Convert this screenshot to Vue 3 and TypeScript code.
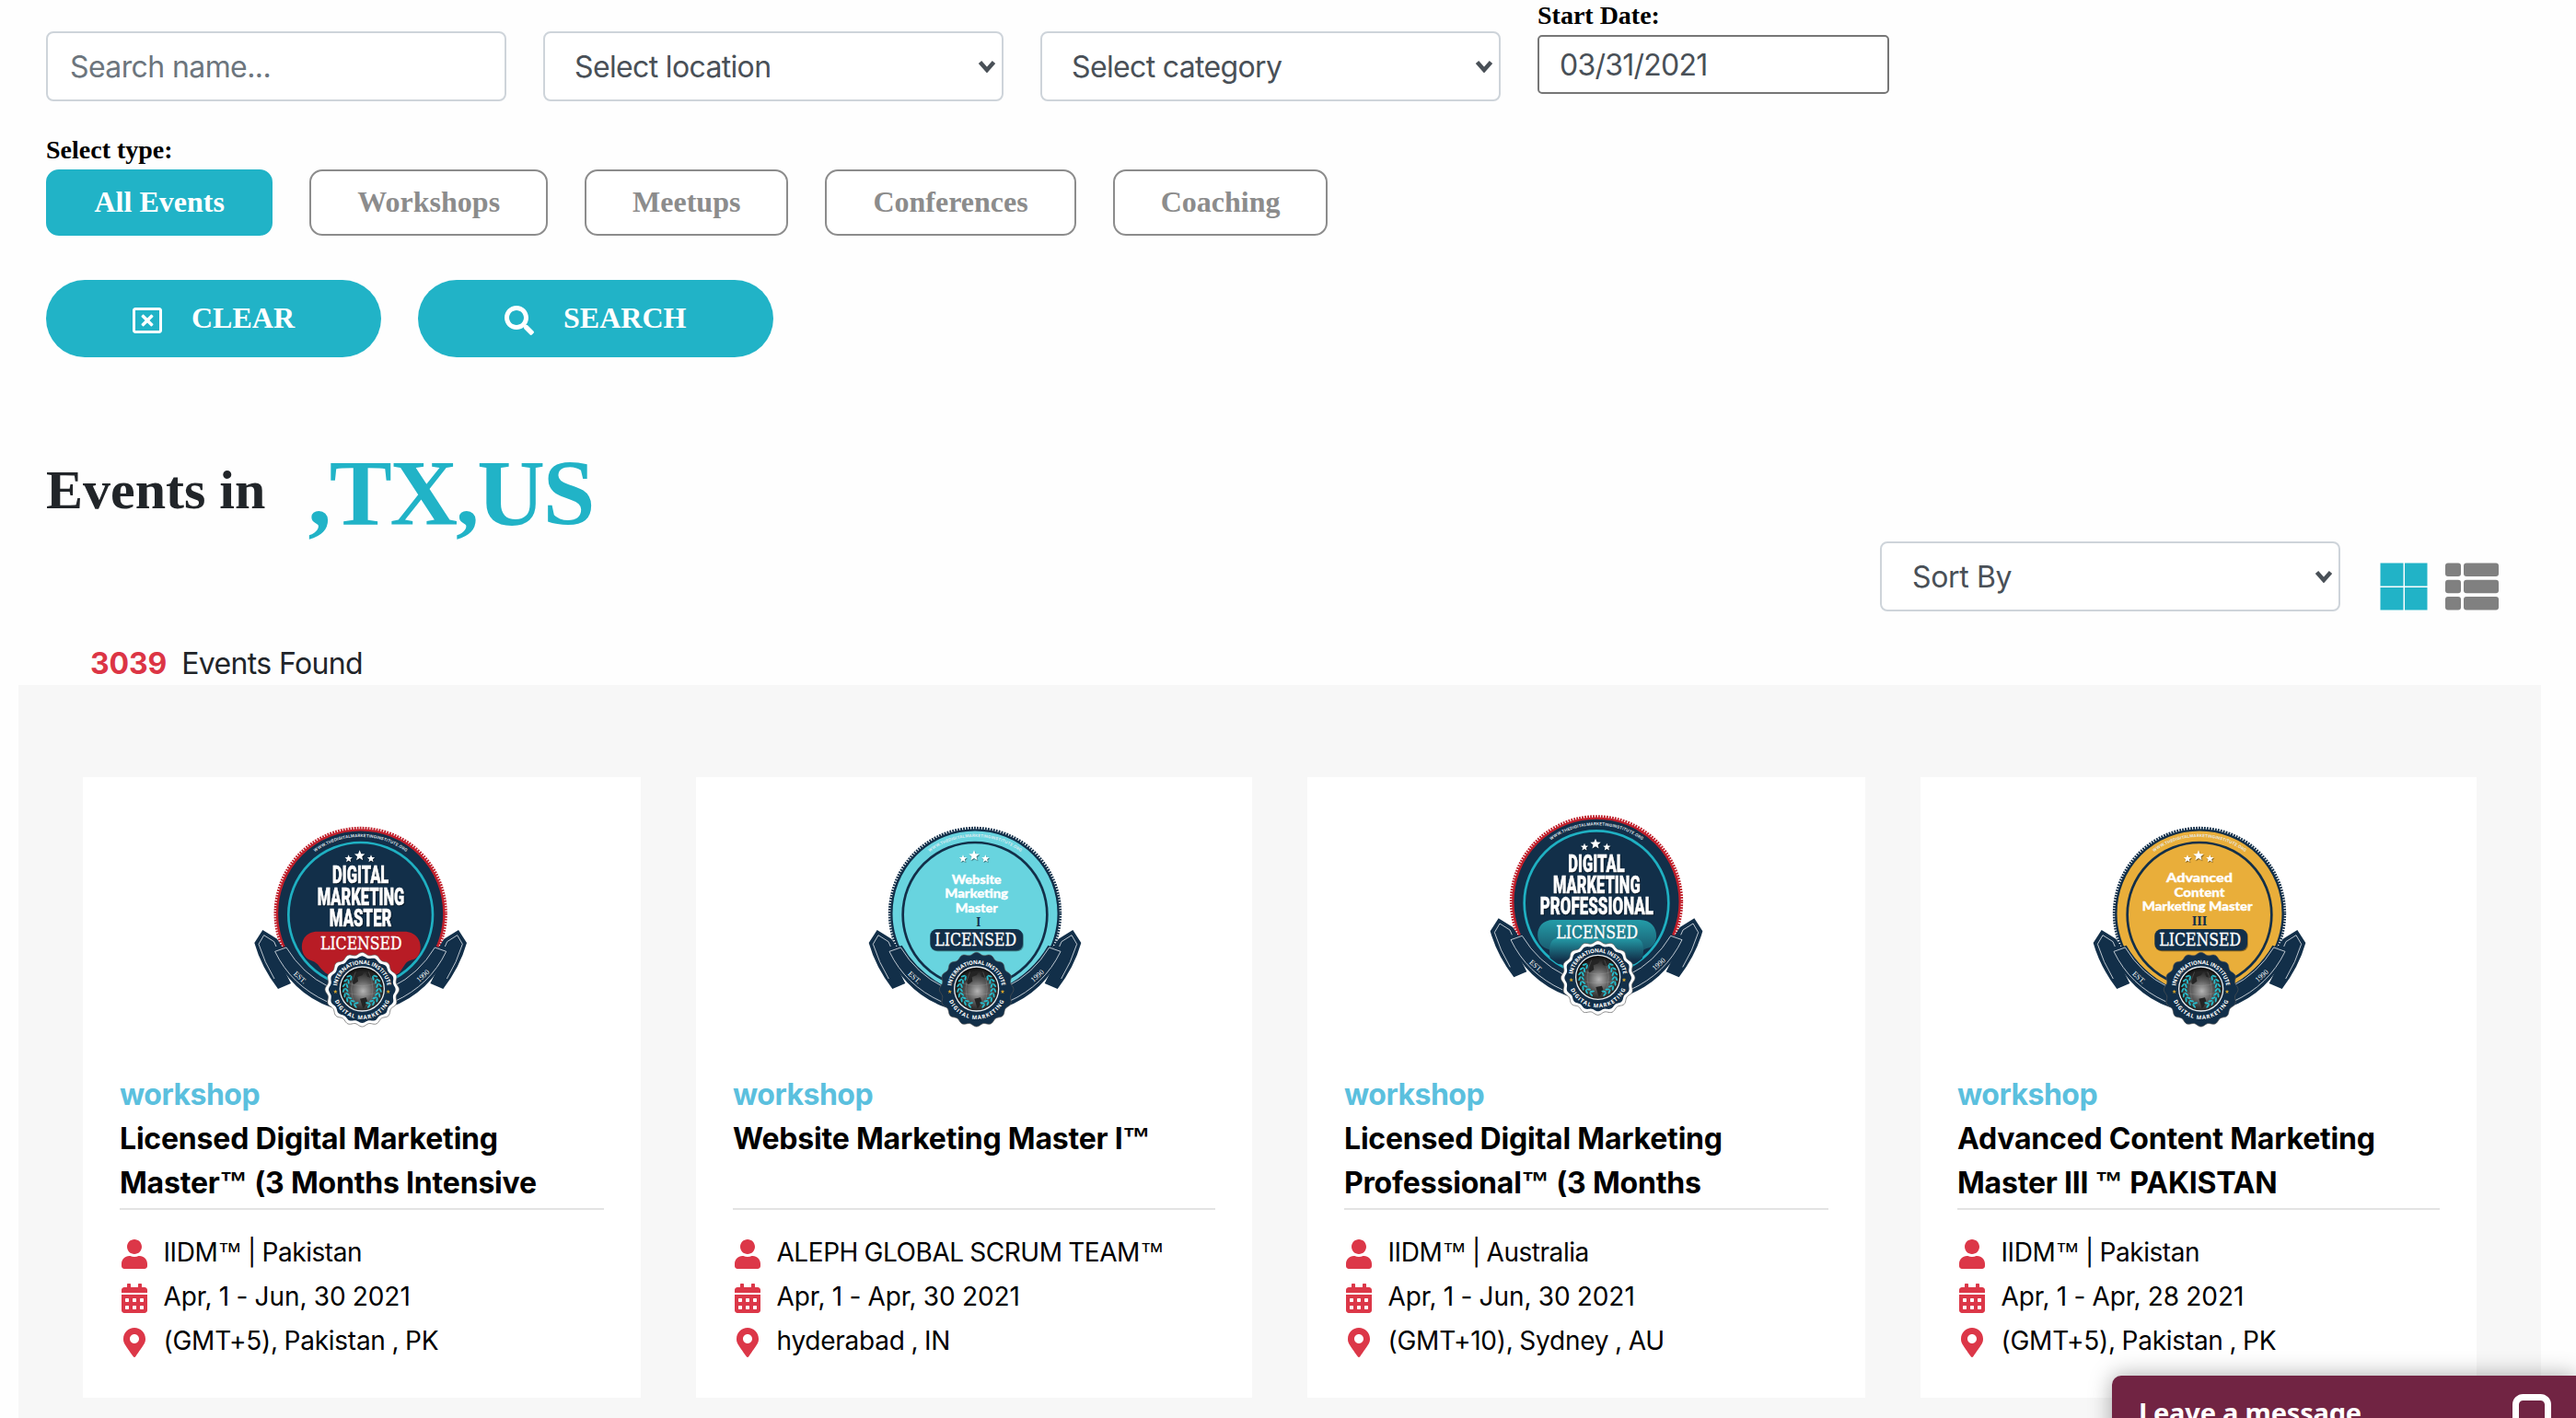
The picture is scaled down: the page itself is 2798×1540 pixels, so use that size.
<script setup lang="ts">
import { ref } from 'vue'

interface Line { text: string; x: number; y: number; w: number }
interface Badge {
  kind: 'dark' | 'light'
  dx: number
  dy: number
  face: string
  teeth: string
  ring: string
  seal: string
  lines: Line[]
  level?: Line
  banner?: 'red' | 'teal'
}
interface EventCard {
  type: string
  title: string[]
  host: string
  date: string
  place: string
  badge: Badge
}

const navy = '#122f49'
const teal = '#1fb0c2'

const types = ['All Events', 'Workshops', 'Meetups', 'Conferences', 'Coaching']
const activeType = ref('All Events')
const startDate = ref('03/31/2021')

const cards: EventCard[] = [
  {
    type: 'workshop',
    title: ['Licensed Digital Marketing', 'Master™ (3 Months Intensive'],
    host: 'IIDM™ | Pakistan',
    date: 'Apr, 1 - Jun, 30 2021',
    place: '(GMT+5), Pakistan , PK',
    badge: {
      kind: 'dark', dx: -8, dy: 0, face: navy, teeth: '#c01f2b', ring: teal, seal: '#ffffff', banner: 'red',
      lines: [
        { text: 'DIGITAL', x: 394, y: 268, w: 184 },
        { text: 'MARKETING', x: 395, y: 338, w: 284 },
        { text: 'MASTER', x: 394, y: 408, w: 203 }
      ]
    }
  },
  {
    type: 'workshop',
    title: ['Website Marketing Master I™'],
    host: 'ALEPH GLOBAL SCRUM TEAM™',
    date: 'Apr, 1 - Apr, 30 2021',
    place: 'hyderabad , IN',
    badge: {
      kind: 'light', dx: -1, dy: 0, face: '#68d4df', teeth: navy, ring: navy, seal: navy,
      lines: [
        { text: 'Website', x: 399, y: 269, w: 162 },
        { text: 'Marketing', x: 399, y: 316, w: 206 },
        { text: 'Master', x: 399, y: 363, w: 138 }
      ],
      level: { text: 'I', x: 405, y: 409, w: 15 }
    }
  },
  {
    type: 'workshop',
    title: ['Licensed Digital Marketing', 'Professional™ (3 Months'],
    host: 'IIDM™ | Australia',
    date: 'Apr, 1 - Jun, 30 2021',
    place: '(GMT+10), Sydney , AU',
    badge: {
      kind: 'dark', dx: 29, dy: -38, face: navy, teeth: '#c01f2b', ring: teal, seal: '#ffffff', banner: 'teal',
      lines: [
        { text: 'DIGITAL', x: 394, y: 268, w: 184 },
        { text: 'MARKETING', x: 395, y: 338, w: 284 },
        { text: 'PROFESSIONAL', x: 395, y: 408, w: 370 }
      ]
    }
  },
  {
    type: 'workshop',
    title: ['Advanced Content Marketing', 'Master III ™ PAKISTAN'],
    host: 'IIDM™ | Pakistan',
    date: 'Apr, 1 - Apr, 28 2021',
    place: '(GMT+5), Pakistan , PK',
    badge: {
      kind: 'light', dx: -1, dy: 0, face: '#e9ae3a', teeth: navy, ring: navy, seal: navy,
      lines: [
        { text: 'Advanced', x: 394, y: 264, w: 216 },
        { text: 'Content', x: 394, y: 311, w: 165 },
        { text: 'Marketing Master', x: 387, y: 358, w: 360 }
      ],
      level: { text: 'III', x: 394, y: 404, w: 50 }
    }
  }
]

// Splits a string so that each trademark sign can carry its own face.
function parts(text: string): string[] {
  return text.split(/(™)/).filter((p) => p !== '')
}

// Closed wavy outline with sixteen lobes, used for the seal.
function scallop(cx: number, cy: number, r: number, amp: number): string {
  const pts: string[] = []
  for (let i = 0; i < 192; i++) {
    const a = (i / 192) * Math.PI * 2
    const rr = r + amp * Math.cos(a * 16)
    pts.push(`${(cx + rr * Math.sin(a)).toFixed(1)},${(cy - rr * Math.cos(a)).toFixed(1)}`)
  }
  return pts.join(' ')
}

function star(cx: number, cy: number, r: number): string {
  const pts: string[] = []
  for (let i = 0; i < 10; i++) {
    const a = (i * Math.PI) / 5
    const rr = i % 2 ? r * 0.45 : r
    pts.push(`${(cx + rr * Math.sin(a)).toFixed(1)},${(cy - rr * Math.cos(a)).toFixed(1)}`)
  }
  return pts.join(' ')
}

// Laurel leaves: angle measured from the bottom of the globe, on both sides.
const leaves = [22, 38, 54, 70, 86, 102, 118, 134].flatMap((a) => [a, -a])
</script>

<template>
  <main class="page">
    <section class="filters">
      <div class="row fields">
        <input class="field" type="text" placeholder="Search name..." />
        <div class="select">
          <select class="field"><option>Select location</option></select>
          <svg class="caret" viewBox="0 0 20 14"><path d="M2.500 2.500 10 11l7.500-8.500" /></svg>
        </div>
        <div class="select">
          <select class="field"><option>Select category</option></select>
          <svg class="caret" viewBox="0 0 20 14"><path d="M2.500 2.500 10 11l7.500-8.500" /></svg>
        </div>
        <div class="date">
          <label class="label">Start Date:</label>
          <input v-model="startDate" class="date-input" type="text" />
        </div>
      </div>

      <div class="label type-label">Select type:</div>
      <div class="row">
        <button
          v-for="t in types"
          :key="t"
          class="type"
          :class="{ active: t === activeType }"
          @click="activeType = t"
        >{{ t }}</button>
      </div>

      <div class="row actions">
        <button class="action">
          <svg class="a-icon" viewBox="0 0 512 512"><path fill="currentColor" d="M464 32H48C21.500 32 0 53.500 0 80v352c0 26.500 21.500 48 48 48h416c26.500 0 48-21.500 48-48V80c0-26.500-21.500-48-48-48zm0 394c0 3.300-2.700 6-6 6H54c-3.300 0-6-2.700-6-6V86c0-3.300 2.700-6 6-6h404c3.300 0 6 2.700 6 6v340zM356.500 194.600L295.100 256l61.400 61.400c4.600 4.600 4.600 12.100 0 16.800l-22.300 22.300c-4.600 4.600-12.100 4.600-16.800 0L256 295.100l-61.400 61.400c-4.600 4.600-12.100 4.600-16.800 0l-22.300-22.300c-4.600-4.600-4.600-12.100 0-16.800l61.400-61.400-61.400-61.400c-4.600-4.600-4.600-12.100 0-16.800l22.300-22.300c4.600-4.600 12.100-4.600 16.800 0l61.400 61.400 61.400-61.400c4.600-4.600 12.100-4.600 16.800 0l22.300 22.300c4.700 4.600 4.700 12.100 0 16.800z" /></svg>
          <span>CLEAR</span>
        </button>
        <button class="action wide">
          <svg class="a-icon" viewBox="0 0 512 512"><path fill="currentColor" d="M505 442.700L405.300 343c-4.500-4.500-10.600-7-17-7H372c27.600-35.300 44-79.700 44-128C416 93.100 322.900 0 208 0S0 93.100 0 208s93.100 208 208 208c48.300 0 92.700-16.400 128-44v16.300c0 6.400 2.500 12.500 7 17l99.700 99.700c9.400 9.400 24.600 9.400 33.900 0l28.300-28.300c9.400-9.400 9.400-24.600.1-34zM208 336c-70.700 0-128-57.200-128-128 0-70.700 57.200-128 128-128 70.700 0 128 57.200 128 128 0 70.700-57.200 128-128 128z" /></svg>
          <span>SEARCH</span>
        </button>
      </div>
    </section>

    <header class="heading">
      <h2>Events in</h2>
      <span class="loc">,TX,US</span>
    </header>

    <div class="toolbar">
      <div class="select">
        <select class="field"><option>Sort By</option></select>
        <svg class="caret" viewBox="0 0 20 14"><path d="M2.500 2.500 10 11l7.500-8.500" /></svg>
      </div>
      <svg class="grid-icon" viewBox="0 0 52 52" fill="#21b3c7">
        <rect x=".5" y=".5" width="25" height="25" /><rect x="27" y=".5" width="24.500" height="25" />
        <rect x=".5" y="27" width="25" height="24.500" /><rect x="27" y="27" width="24.500" height="24.500" />
      </svg>
      <svg class="list-icon" viewBox="0 0 58 52" fill="#808080">
        <g v-for="y in [0.5, 18.700, 37]" :key="y">
          <rect x="0" :y="y" width="17" height="14.500" rx="3" />
          <rect x="20" :y="y" width="38" height="14.500" rx="3" />
        </g>
      </svg>
    </div>

    <div class="count"><b>3039</b><span>Events Found</span></div>

    <section class="results">
      <article v-for="(c, i) in cards" :key="i" class="card">
        <svg class="badge" viewBox="0 0 780 780">
          <defs>
            <radialGradient :id="`globe${i}`" cx=".52" cy=".55" r=".58">
              <stop offset="0" stop-color="#b4b4b4" /><stop offset=".4" stop-color="#5e5e5e" /><stop offset=".9" stop-color="#0e0e0e" />
            </radialGradient>
            <linearGradient :id="`ban${i}`" x1="0" y1="0" x2="0" y2="1">
              <stop offset="0" stop-color="#249ca8" /><stop offset=".85" stop-color="#12304a" />
            </linearGradient>
            <path :id="`url${i}`" d="M238 171 A252 252 0 0 1 550 171" />
            <path :id="`top${i}`" d="M316 614 A83 83 0 0 1 482 614" />
            <path :id="`bot${i}`" d="M302 614 A97 97 0 0 0 496 614" />
            <clipPath :id="`clip${i}`"><circle cx="394" cy="370" r="235" /></clipPath>
          </defs>
          <g :transform="`translate(${c.badge.dx} ${c.badge.dy})`">
            <circle cx="394" cy="366" r="278" fill="none" :stroke="c.badge.teeth" stroke-width="9" stroke-dasharray="5.500 3.500" />
            <circle cx="394" cy="366" r="272" :fill="c.badge.face" :stroke="c.badge.teeth" stroke-width="7" />
            <circle cx="394" cy="370" r="235" fill="none" :stroke="c.badge.ring" stroke-width="8" />
            <text class="url"><textPath :href="`#url${i}`" startOffset="50%" textLength="318">WWW.THEDIGITALMARKETINGINSTITUTE.ORG</textPath></text>
            <g fill="#fff" class="raised">
              <polygon :points="star(391, 178, 18)" /><polygon :points="star(355, 188, 13)" /><polygon :points="star(428, 188, 13)" />
            </g>

            <g v-if="c.badge.banner" :clip-path="`url(#clip${i})`">
              <path
                d="M254 425H535C601 425 601 504 566 516Q548 520 540 530Q530 545 520 560L399 620L280 560Q262 545 254 532Q244 522 230 518C190 504 190 425 254 425Z"
                :fill="c.badge.banner === 'red' ? '#b81c25' : `url(#ban${i})`"
              />
              <path
                v-if="c.badge.banner === 'teal'"
                d="M270 484H516C560 484 546 540 540 570H246C238 530 236 484 270 484Z"
                :fill="`url(#ban${i})`"
              />
            </g>
            <rect v-else class="raised" x="248" y="417" width="302" height="70" rx="22" :fill="navy" />

            <text
              v-for="l in c.badge.lines"
              :key="l.text"
              :class="c.badge.kind"
              :x="l.x" :y="l.y" :textLength="l.w" lengthAdjust="spacingAndGlyphs"
            >{{ l.text }}</text>
            <text
              v-if="c.badge.level"
              class="level"
              :x="c.badge.level.x" :y="c.badge.level.y" :textLength="c.badge.level.w" lengthAdjust="spacingAndGlyphs"
            >{{ c.badge.level.text }}</text>
            <text class="licensed" x="396" :y="c.badge.banner ? 484 : 472" textLength="266" lengthAdjust="spacingAndGlyphs">LICENSED</text>

            <g v-for="s in [1, -1]" :key="s" :transform="s === 1 ? '' : 'translate(788 0) scale(-1 1)'">
              <path d="M75 420L122 449L140 478L114 489L167 594L125 612Q70 540 48 462Z" :fill="navy" />
              <path d="M113 579Q80 525 62 466L79 437L112 458L119 474" fill="none" stroke="#dfe5ea" stroke-width="2.500" />
              <path d="M108 488L156 470Q205 556 300 606V673Q165 624 108 488Z" :fill="navy" />
              <path d="M284 653Q168 600 115 490L152 477Q204 563 290 605" fill="none" stroke="#dfe5ea" stroke-width="2.500" />
            </g>
            <text class="year" x="195" y="582" transform="rotate(42 195 577)">EST.</text>
            <text class="year" x="597" y="577" transform="rotate(-42 597 569)">1990</text>

            <polygon :points="scallop(399, 614, 117, 4)" :fill="c.badge.seal" stroke="#555" stroke-width="2" />
            <polygon v-if="c.badge.seal !== navy" :points="scallop(399, 614, 106, 3)" :fill="navy" />
            <circle cx="399" cy="612" r="72" :fill="`url(#globe${i})`" stroke="#e8ecef" stroke-width="4" />
            <path d="M368 566q16-14 38-11l-6 12-16 6 2 14-14 10-8-10zM412 562q16-10 32 4l-16 10-12-4zM392 644l20-4 4 12-8 18-6 6z" fill="#242424" />
            <path d="M345 590Q399 614 453 590M338 622Q399 640 460 622M378 556Q350 612 378 668M420 556Q448 612 420 668" fill="none" stroke="#aaa" stroke-width="1.500" opacity=".5" />
            <g fill="#27bccb">
              <g v-for="a in leaves" :key="a" :transform="`rotate(${a} 399 612)`">
                <ellipse cx="399" cy="672" rx="8" ry="3" :transform="`rotate(${a > 0 ? 28 : -28} 399 672)`" />
                <ellipse cx="399" cy="662" rx="8" ry="3" :transform="`rotate(${a > 0 ? -32 : 32} 399 662)`" />
              </g>
            </g>
            <text class="ringtext"><textPath :href="`#top${i}`" startOffset="50%" textLength="236">INTERNATIONAL INSTITUTE</textPath></text>
            <text class="ringtext"><textPath :href="`#bot${i}`" startOffset="50%" textLength="228">DIGITAL MARKETING</textPath></text>
            <polygon :points="star(312, 621, 7)" fill="#dba62a" /><polygon :points="star(484, 621, 7)" fill="#dba62a" />
          </g>
        </svg>

        <div class="kind">{{ c.type }}</div>
        <h3 class="title">
          <span v-for="t in c.title" :key="t" class="line"><span v-for="(p, k) in parts(t)" :key="k" :class="{ tm: p === '™' }">{{ p }}</span></span>
        </h3>
        <ul class="info">
          <li>
            <svg viewBox="0 0 448 512"><path fill="currentColor" d="M224 256c70.700 0 128-57.300 128-128S294.700 0 224 0 96 57.300 96 128s57.300 128 128 128zm89.600 32h-16.700c-22.200 10.200-46.900 16-72.900 16s-50.600-5.800-72.900-16h-16.700C60.200 288 0 348.200 0 422.400V464c0 26.500 21.500 48 48 48h352c26.500 0 48-21.500 48-48v-41.600c0-74.200-60.200-134.400-134.400-134.400z" /></svg>
            <div class="host"><span v-for="(p, k) in parts(c.host)" :key="k" :class="{ tm: p === '™' }">{{ p }}</span></div>
          </li>
          <li>
            <svg viewBox="0 0 448 512"><path fill="currentColor" fill-rule="evenodd" d="M0 464c0 26.500 21.500 48 48 48h352c26.500 0 48-21.500 48-48V192H0zM64 268q0-12 12-12h40q12 0 12 12v40q0 12-12 12h-40q-12 0-12-12zm128 0q0-12 12-12h40q12 0 12 12v40q0 12-12 12h-40q-12 0-12-12zm128 0q0-12 12-12h40q12 0 12 12v40q0 12-12 12h-40q-12 0-12-12zM64 396q0-12 12-12h40q12 0 12 12v40q0 12-12 12h-40q-12 0-12-12zm128 0q0-12 12-12h40q12 0 12 12v40q0 12-12 12h-40q-12 0-12-12zm128 0q0-12 12-12h40q12 0 12 12v40q0 12-12 12h-40q-12 0-12-12zM400 64h-48V16c0-8.800-7.200-16-16-16h-32c-8.800 0-16 7.200-16 16v48H160V16c0-8.800-7.200-16-16-16h-32c-8.800 0-16 7.200-16 16v48H48C21.500 64 0 85.500 0 112v48h448v-48c0-26.500-21.500-48-48-48z" /></svg>
            <div class="when">{{ c.date }}</div>
          </li>
          <li>
            <svg viewBox="-32 0 448 512"><path fill="currentColor" d="M172.300 501.700C27 291 0 269.400 0 192 0 86 86 0 192 0s192 86 192 192c0 77.400-27 99-172.300 309.700-9.500 13.800-29.900 13.800-39.400 0zM192 272c44.200 0 80-35.800 80-80s-35.800-80-80-80-80 35.800-80 80 35.800 80 80 80z" /></svg>
            <div>{{ c.place }}</div>
          </li>
        </ul>
      </article>
    </section>

    <aside class="chat">
      <span>Leave a message</span>
      <svg viewBox="0 0 42 42"><rect x="3.500" y="3.500" width="35" height="35" rx="8" fill="none" stroke="#fff" stroke-width="7" /></svg>
    </aside>
  </main>
</template>

<style>
body { background: #fefefe; overflow: hidden; }
</style>

<style scoped>
* { box-sizing: border-box; }
.page {
  position: relative;
  width: 2798px;
  height: 1540px;
  overflow: hidden;
  background: #fefefe;
  color: #212529;
  font-family: Inter, "Liberation Sans", sans-serif;
  font-size: 32px;
  line-height: 48px;
}
.filters { padding: 0 50px; }
.row { display: flex; gap: 40px; align-items: flex-start; }
.fields { height: 110px; }
.fields > .field, .fields > .select { margin-top: 34px; }
.field {
  display: block;
  width: 500px;
  height: 76px;
  padding: 1px 24px 0;
  border: 2px solid #ced4da;
  border-radius: 8px;
  background: #fff;
  color: #495057;
  font: 400 32px/48px Inter, "Liberation Sans", sans-serif;
  letter-spacing: -0.65px;
  appearance: none;
}
.field::placeholder { color: #6c757d; opacity: 1; letter-spacing: -0.6px; }
select.field { padding-left: 32px; }
.select { position: relative; width: 500px; }
.caret { position: absolute; right: 8px; top: 31px; width: 20px; height: 14px; }
.caret path { fill: none; stroke: #495057; stroke-width: 4.500; }
.toolbar .field { letter-spacing: -0.35px; padding-left: 33px; }
.label {
  height: 33px;
  margin-bottom: 5px;
  font: bold 28px/33px "Liberation Serif", serif;
  color: #000;
}
.date { display: flex; flex-direction: column; }
.date-input {
  width: 382px;
  height: 64px;
  padding: 1px 22px 0;
  border: 2px solid #767676;
  border-radius: 5px;
  background: #fff;
  color: #495057;
  font: 400 32px/48px Inter, "Liberation Sans", sans-serif;
  letter-spacing: -0.75px;
}
.type-label { margin-top: 36px; }
.type {
  height: 72px;
  padding: 0 50px 2px;
  border: 2px solid #8c8c8c;
  border-radius: 14px;
  background: #fff;
  color: #8c8c8c;
  font: bold 32px/36px "Liberation Serif", serif;
}
.type.active { padding: 0 50.5px 2px; background: #21b3c7; border-color: #21b3c7; color: #fff; }
.actions { margin-top: 48px; }
.action {
  display: flex;
  align-items: center;
  height: 84px;
  padding: 0 94px;
  border: 0;
  border-radius: 42px;
  background: #21b3c7;
  color: #fff;
  font: bold 32px/36px "Liberation Serif", serif;
}
.action.wide { padding-right: 95px; }
.action span { margin: -2px 0 0 32px; }
.a-icon { width: 32px; height: 32px; margin-top: 4px; }
.heading { display: flex; align-items: flex-start; height: 112px; margin: 88px 50px 0; }
h2 { margin: 20px 0 0; font: bold 60px/72px "Liberation Serif", serif; }
.loc { margin-left: 46px; font: bold 102px/120px "Liberation Serif", serif; letter-spacing: -2.2px; color: #21b3c7; }
.toolbar { display: flex; justify-content: flex-end; height: 76px; padding-right: 84px; }
.grid-icon { width: 52px; height: 52px; margin: 23px 19px 0 43px; }
.list-icon { width: 58px; height: 52px; margin-top: 23px; }
.count { display: flex; gap: 16px; margin-top: 32px; padding: 1px 0 0 98px; height: 48px; }
.count b { color: #dc3545; font-weight: 700; letter-spacing: -0.1px; }
.count span { letter-spacing: -0.65px; }
.results {
  display: grid;
  grid-template-columns: 606px 604px 606px 604px;
  gap: 60px;
  width: 2740px;
  height: 796px;
  margin-left: 20px;
  padding: 100px 70px 0;
  background: #f7f7f7;
}
.card { height: 674px; padding: 26px 40px 0; background: #fff; color: #000; }
.badge { display: block; width: 260px; height: 260px; margin: 0 auto 35px; }
.kind { height: 48px; color: #5bc0de; font-weight: 700; letter-spacing: -0.5px; }
.title { height: 101px; margin: 0; border-bottom: 2px solid #e3e3e3; font-size: 32px; font-weight: 700; line-height: 48px; letter-spacing: -0.2px; }
.line { display: block; height: 48px; white-space: pre; }
.tm { font-family: "Liberation Sans", Arial, sans-serif; font-size: 0.95em; line-height: 0; vertical-align: 0.06em; }
.info { margin: 22px 0 0; padding: 0; list-style: none; font-size: 28px; letter-spacing: -0.25px; word-spacing: -0.8px; }
.info li { display: flex; align-items: center; height: 48px; white-space: pre; }
.info svg { width: 28px; height: 32px; margin: 4px 17.500px 0 2px; color: #dc3748; }
.host { letter-spacing: -0.45px; }
.when { letter-spacing: -0.05px; word-spacing: -0.6px; }
.chat {
  position: absolute;
  left: 2294px;
  top: 1494px;
  display: flex;
  justify-content: space-between;
  width: 504px;
  height: 80px;
  padding: 20px 27px 0 29px;
  border-radius: 10px 0 0 0;
  background: #712443;
  box-shadow: 0 0 24px rgba(0, 0, 0, 0.35);
  color: #fff;
  font: bold 29px/40px "Noto Sans", "Open Sans", sans-serif;
  letter-spacing: -0.2px;
}
.chat svg { width: 42px; height: 42px; }
.badge text { text-anchor: middle; fill: #fff; }
.badge .dark { font: 900 80px Roboto, sans-serif; stroke: #fff; stroke-width: 1.5px; filter: drop-shadow(2px 3px 1px #0008); }
.badge .light { font: 900 42px Lato, sans-serif; stroke: #fff; stroke-width: 1px; }
.badge .level { font: bold 38px "DejaVu Serif", serif; fill: #122f49; }
.badge .licensed { font: 400 57px "DejaVu Serif", serif; stroke: #fff; stroke-width: 1px; }
.badge .year { font: 400 24px "Liberation Serif", serif; }
.badge .url { font: 600 13px Inter, sans-serif; fill: #e4edf2; }
.badge .ringtext { font: 700 18px "Open Sans", sans-serif; }
.raised { filter: drop-shadow(2px 3px 2px #0007); }
</style>
